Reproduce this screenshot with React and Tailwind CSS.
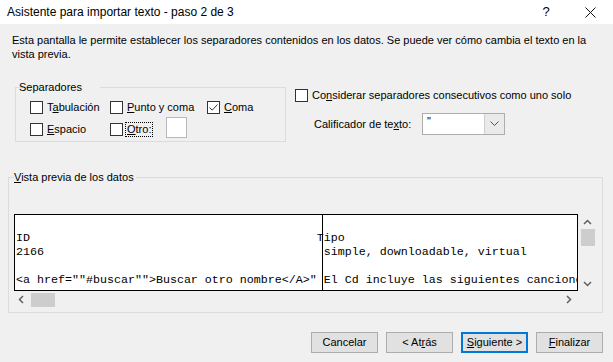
import React from "react";

const ui = { fontFamily: '"Liberation Sans", Arial, sans-serif' };
const mono = { fontFamily: '"Liberation Mono", "Courier New", monospace' };

const CheckBox = ({ checked }) => (
  <span className="w-[13px] h-[13px] border border-[#333] bg-white flex items-center justify-center shrink-0">
    {checked && (
      <svg width="11" height="11" viewBox="0 0 11 11">
        <path d="M1.5 5.5 L4.2 8.2 L9.5 2.5" fill="none" stroke="#333" strokeWidth="1" />
      </svg>
    )}
  </span>
);

const Option = ({ checked, children, className = "" }) => (
  <label className={`flex items-center h-[14px] gap-[4px] ${className}`}>
    <CheckBox checked={checked} />
    <span className="leading-[14px]">{children}</span>
  </label>
);

const Button = ({ children, focused }) => (
  <button
    className={`w-[67px] h-[21px] bg-[#e1e1e1] text-[11px] text-black flex items-center justify-center ${
      focused ? "border-2 border-[#0078d7]" : "border border-[#adadad]"
    }`}
  >
    {children}
  </button>
);

const lines = [
  "",
  "ID" + " ".repeat(41) + "Tipo",
  "2166" + " ".repeat(40) + "simple, downloadable, virtual",
  "",
  '<a href=""#buscar"">Buscar otro nombre</A>" El Cd incluye las siguientes canciones',
];

export default function App() {
  return (
    <div style={ui} className="w-[613px] h-[362px] bg-[#f0f0f0] text-[11px] text-black flex flex-col overflow-hidden">
      {/* Title bar */}
      <div className="h-[24px] bg-white flex items-center pl-[7px] shrink-0">
        <span className="text-[12px]">Asistente para importar texto - paso 2 de 3</span>
        <span className="ml-auto text-[13px] w-[12px] text-center">?</span>
        <span className="ml-[33px] mr-[17px] flex items-center">
          <svg width="11" height="11" viewBox="0 0 11 11">
            <path d="M0.5 0.5 L10.5 10.5 M10.5 0.5 L0.5 10.5" stroke="#111" strokeWidth="1" />
          </svg>
        </span>
      </div>

      <p className="mt-[9px] px-[12px] leading-[14px] w-[600px]">
        Esta pantalla le permite establecer los separadores contenidos en los datos. Se puede ver cómo cambia el texto en la vista
        previa.
      </p>

      <div className="flex mt-[19px]">
        {/* Separadores */}
        <fieldset className="ml-[15px] w-[271px] border border-[#dcdcdc] pl-[14px] pb-[3px]">
          <legend className="ml-[1px] px-[3px] leading-[14px] -translate-x-[15px]">Separadores</legend>
          <div className="flex mt-[6px]">
            <Option className="w-[80px]">
              T<u>a</u>bulación
            </Option>
            <Option className="w-[97px]">
              <u>P</u>unto y coma
            </Option>
            <Option checked>
              <u>C</u>oma
            </Option>
          </div>
          <div className="flex items-start mt-[3px]">
            <Option className="w-[80px] mt-[5px]">
              <u>E</u>spacio
            </Option>
            <label className="flex items-center h-[14px] gap-[2px] mt-[5px]">
              <CheckBox />
              <span className="leading-[13px] border border-dotted border-black px-[1px]">
                <u>O</u>tro:
              </span>
            </label>
            <span className="ml-[13px] w-[21px] h-[21px] bg-white border border-[#b9b9b9]" />
          </div>
        </fieldset>

        {/* Right options */}
        <div className="flex flex-col ml-[9px] mt-[8px]">
          <Option>
            Co<u>n</u>siderar separadores consecutivos como uno solo
          </Option>
          <div className="flex items-center mt-[11px] ml-[19px]">
            <span className="w-[108px]">
              Calificador de te<u>x</u>to:
            </span>
            <div className="w-[83px] h-[22px] bg-white border border-[#adadad] flex">
              <span className="flex-1 pl-[4px] leading-[14px] text-[11px]">"</span>
              <span className="w-[20px] h-full bg-[#eaeaea] border-l border-[#cfcfcf] flex items-center justify-center">
                <svg width="9" height="6" viewBox="0 0 9 6">
                  <path d="M0.5 0.5 L4.5 4.5 L8.5 0.5" fill="none" stroke="#555" strokeWidth="1" />
                </svg>
              </span>
            </div>
          </div>
        </div>
      </div>

      {/* Vista previa */}
      <fieldset className="ml-[8px] mt-[28px] w-[595px] border border-[#dcdcdc] px-[5px] pb-[5px]">
        <legend className="leading-[14px] pr-[2px]">
          <u>V</u>ista previa de los datos
        </legend>
        <div className="flex mt-[30px]">
          <div className="relative w-[564px] h-[77px] bg-white border border-black overflow-hidden">
            <div style={mono} className="pt-[2px] pl-[1px] text-[11.67px] leading-[14px] whitespace-pre text-black">
              {lines.map((l, i) => (
                <div key={i} className="h-[14px]">
                  {l}
                </div>
              ))}
            </div>
            <div className="absolute top-0 bottom-0 left-[307px] w-px bg-black" />
          </div>
          <div className="ml-[2px] w-[15px] h-[77px] flex flex-col items-center">
            <svg width="9" height="6" viewBox="0 0 9 6" className="mt-[5px]">
              <path d="M1 5 L4.5 1.5 L8 5" fill="none" stroke="#606060" strokeWidth="1.5" />
            </svg>
            <span className="mt-[4px] w-[14px] h-[17px] bg-[#cdcdcd]" />
            <svg width="9" height="6" viewBox="0 0 9 6" className="mt-auto mb-[4px]">
              <path d="M1 1 L4.5 4.5 L8 1" fill="none" stroke="#606060" strokeWidth="1.5" />
            </svg>
          </div>
        </div>
        <div className="mt-[1px] w-[564px] h-[15px] flex items-center">
          <svg width="6" height="9" viewBox="0 0 6 9" className="ml-[4px]">
            <path d="M5 1 L1.5 4.5 L5 8" fill="none" stroke="#606060" strokeWidth="1.5" />
          </svg>
          <span className="ml-[7px] w-[24px] h-[14px] bg-[#cdcdcd]" />
          <svg width="6" height="9" viewBox="0 0 6 9" className="ml-auto mr-[6px]">
            <path d="M1 1 L4.5 4.5 L1 8" fill="none" stroke="#606060" strokeWidth="1.5" />
          </svg>
        </div>
      </fieldset>

      {/* Buttons */}
      <div className="flex justify-end gap-[8px] mt-[19px] pr-[10px]">
        <Button>Cancelar</Button>
        <Button>
          &lt; At<u>r</u>ás
        </Button>
        <Button focused>
          <u>S</u>iguiente &gt;
        </Button>
        <Button>
          <u>F</u>inalizar
        </Button>
      </div>
    </div>
  );
}
